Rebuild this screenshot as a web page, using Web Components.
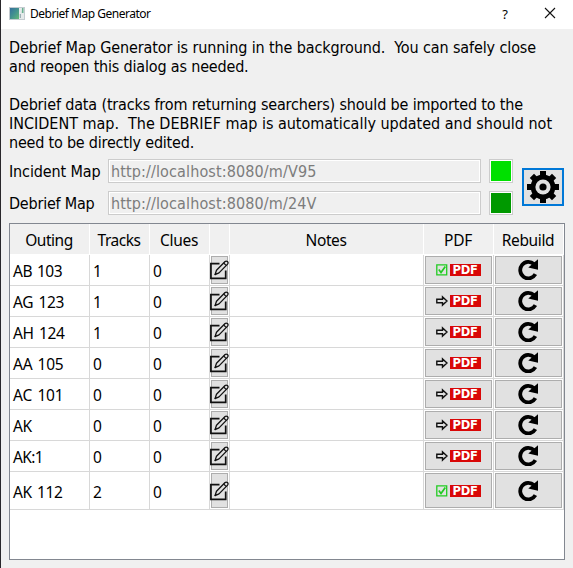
<!DOCTYPE html>
<html lang="en">
<head>
<meta charset="utf-8">
<title>Debrief Map Generator</title>
<style>
html,body{margin:0;height:100%;overflow:hidden;background:#f0f0f0}
body{font-family:"Noto Sans","Open Sans",sans-serif;color:#000}
</style>
</head>
<body>
<debrief-window></debrief-window>
<script>
const define = (name, html, init) => customElements.define(name, class extends HTMLElement {
  connectedCallback() {
    if (this.shadowRoot) return;
    this.attachShadow({mode: 'open'}).innerHTML = typeof html === 'function' ? html(this) : html;
    if (init) init(this);
  }
});

// A single line of text tracked to a given width in pixels.
define('fit-text', e => `<style>:host{display:block;white-space:pre}span{display:inline-block}</style><span>${e.getAttribute('text')}</span>`, e => {
  const s = e.shadowRoot.querySelector('span');
  const n = e.getAttribute('text').length;
  const w = parseFloat(e.getAttribute('w'));
  s.style.letterSpacing = ((w - s.getBoundingClientRect().width) / n) + 'px';
});

define('edit-icon', `<style>:host{display:block;width:20px;height:20px;flex:none}svg{display:block}</style>
<svg width="20" height="20" viewBox="0 0 20 20" fill="none" stroke="#101010">
<path d="M9.5 3.7H.9V18.3H15.7V10.5" stroke-width="1.7"/>
<path d="M5 14.6 6.5 10.3 15.1 1.5Q16.2.6 17.4 1.6T17.6 4.1L9 12.9Z" fill="#e1e1e1" stroke-width="1.3" stroke-linejoin="round"/>
<path d="M13.7 3 16.1 5.4M4.8 14.8 6.5 13.1" stroke-width="1.1"/></svg>`);

define('rebuild-icon', `<style>:host{display:block;width:20px;height:21px;flex:none;margin:0 1px 1px 0}svg{display:block}</style>
<svg width="20" height="21" viewBox="0 0 20 21"><path d="M17.4 15.2A8.1 8.3 0 1 1 16 5.2" fill="none" stroke="#000" stroke-width="3.8"/><path d="M20 .2V10.8L10.3 8.4Z"/></svg>`);

define('gear-icon', `<style>:host{display:block;width:32px;height:32px}svg{display:block}</style>
<svg width="32" height="32" viewBox="-16 -16 32 32"><path d="M-3-16H3V16H-3ZM-16-3V3H16V-3Z"/><path transform="rotate(45)" d="M-3-15.7H3V15.7H-3ZM-15.7-3V3H15.7V-3Z"/><circle r="12.4"/><circle r="7.6" fill="#e1e1e1"/><circle r="3.6"/></svg>`);

define('pdf-icon', e => `<style>:host{display:flex;align-items:center;gap:2px;width:45px;height:12px;flex:none;margin-right:1px}svg{display:block}
b{display:block;width:31px;height:12px;background:#d90808;color:#fff;font:bold 11.5px/12px "DejaVu Sans",sans-serif;text-align:center;letter-spacing:-.3px}</style>
${e.hasAttribute('done')
 ? '<svg width="12" height="12" viewBox="0 0 12 12" fill="none" stroke="#22cb22"><path d="M.8.8H10.7V10.9H.8Z" stroke-width="1.3"/><path d="M2.8 5.6 5 8.5 9.3 2.5" stroke-width="1.7"/></svg>'
 : '<svg width="12" height="12" viewBox="0 0 12 12" fill="none" stroke="#111" stroke-width="1.4"><path d="M.8 4.2H6.5V1.9L11 6 6.5 10.1V7.8H.8Z"/></svg>'}<b>PDF</b>`);

define('tool-button', `<style>:host{display:flex;box-sizing:border-box;align-items:center;justify-content:center;background:#e1e1e1;border:1px solid #adadad;min-width:0}</style><slot></slot>`);

define('title-bar', `<style>:host{display:flex;box-sizing:border-box;height:29px;background:#fff;align-items:center;padding:0 17px 3px 8px;font-size:12px;line-height:16px}
.i{display:block;width:16px;height:13px;margin-right:5px}fit-text{margin-top:2px}.q{margin:1px 36px 0 auto;font-size:13px}.x{display:block}</style>
<svg class="i" viewBox="0 0 16 13"><defs><linearGradient id="m" x2="1" y2="1"><stop stop-color="#356f9c"/><stop offset=".5" stop-color="#43928f"/><stop offset="1" stop-color="#65b977"/></linearGradient></defs><path fill="#c4cbd0" d="M0 0H16V13H0Z"/><path fill="url(#m)" d="M1 1H10V12H1Z"/><path fill="#e5eaea" d="M10 1H15V12H10Z"/><path fill="#6ab191" d="M13 1H14.5V6H12.8Z"/><path fill="#9baeb5" d="M10.7 7H12V11H10.7Z"/></svg>
<fit-text text="Debrief Map Generator" w="120.5"></fit-text><span class="q">?</span>
<svg class="x" width="12" height="12" viewBox="0 0 12 12" stroke="#111" stroke-width="1.1"><path d="M1 1 11 11M11 1 1 11"/></svg>`);

define('map-row', e => `<style>:host{display:flex;height:24px;align-items:center;font-size:16px;line-height:24px}
.l{width:99px;padding-top:2px}.f,.s{box-sizing:border-box;height:24px;border:1px solid #ccc;box-shadow:inset 0 0 0 1px #fff}
.f{width:373px;padding:1px 0 0 2px;color:#7c7c7c;line-height:22px}.s{width:24px;margin-left:8px;padding:1px}.s i{display:block;height:20px;background:${e.getAttribute('color')}}</style>
<fit-text class="l" text="${e.getAttribute('label')}" w="${e.getAttribute('lw')}"></fit-text><div class="f"><fit-text text="${e.getAttribute('url')}" w="205.5"></fit-text></div><div class="s"><i></i></div>`);

const rows = [['AB 103',1,1,49],['AG 123',1,0,51],['AH 124',1,0,51.5],['AA 105',0,0,50.5],['AC 101',0,0,50.5],['AK',0,0,18.5],['AK:1',0,0,30],['AK 112',2,1,49.5]];
const heads = [['Outing',47.5],['Tracks',43],['Clues',38],null,['Notes',41],['PDF',28],['Rebuild',52.5]];
define('outing-table', `<style>:host{display:block;box-sizing:border-box;width:556px;height:337px;border:1px solid #828790;background:#fff;font-size:15.5px;word-spacing:1.5px}
.r{display:grid;grid-template-columns:80px 60px 60px 20px 194px 70px 70px;height:31px}
.r:last-child{height:38px}
.c{box-sizing:border-box;border-right:1px solid #d8d8d8;border-bottom:1px solid #d8d8d8;display:flex;align-items:center;padding:3px 0 0 3px;min-width:0}
.c.b{padding:1px;align-items:stretch}.b tool-button{flex:1}
.h .c{background:#f0f0f0;border-right-color:#fff;border-bottom-color:#fff;justify-content:center;padding:3px 1px 0 0}
</style>
<div class="r h">${heads.map(h => `<div class="c">${h ? `<fit-text text="${h[0]}" w="${h[1]}"></fit-text>` : ''}</div>`).join('')}</div>
${rows.map(([o,t,d,w]) => `<div class="r"><div class="c"><fit-text text="${o}" w="${w}"></fit-text></div><div class="c">${t}</div><div class="c">0</div><div class="c b"><tool-button><edit-icon></edit-icon></tool-button></div><div class="c"></div><div class="c b"><tool-button><pdf-icon ${d ? 'done' : ''}></pdf-icon></tool-button></div><div class="c b"><tool-button><rebuild-icon></rebuild-icon></tool-button></div></div>`).join('')}`);

define('debrief-window', `<style>:host{display:block;box-sizing:border-box;width:573px;height:568px;background:#f0f0f0;border-left:1px solid #29272b}
.body{padding:9px 0 0 8px;font-size:16px;line-height:19px}.g{height:19px}
.tahoma{font-family:"DejaVu Sans Condensed","DejaVu Sans",sans-serif;font-stretch:condensed;font-size:16px}
.maps{display:flex;align-items:center;margin-top:7px;height:56px}.rows{display:grid;gap:8px}
.gear{width:42px;height:38px;border:2px solid #0078d7;margin-left:9px}
outing-table{margin-top:8px}</style>
<title-bar></title-bar><div class="body"><div class="tahoma">
<fit-text text="Debrief Map Generator is running in the background.  You can safely close" w="527"></fit-text>
<fit-text text="and reopen this dialog as needed." w="239.5"></fit-text><div class="g"></div>
<fit-text text="Debrief data (tracks from returning searchers) should be imported to the" w="514"></fit-text>
<fit-text text="INCIDENT map.  The DEBRIEF map is automatically updated and should not" w="543"></fit-text>
<fit-text text="need to be directly edited." w="185"></fit-text>
<div class="maps"><div class="rows"><map-row label="Incident Map" lw="91.5" url="http://localhost:8080/m/V95" color="#00e000"></map-row><map-row label="Debrief Map" lw="85.5" url="http://localhost:8080/m/24V" color="#009900"></map-row></div><tool-button class="gear"><gear-icon></gear-icon></tool-button></div></div>
<outing-table></outing-table></div>`);
</script>
</body>
</html>
